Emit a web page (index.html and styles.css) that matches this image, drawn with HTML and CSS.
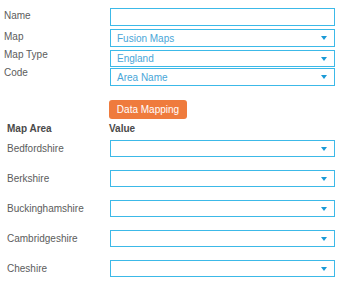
FILE: index.html
```html
<!DOCTYPE html>
<html lang="en">
<head>
	<meta charset="UTF-8">
	<title>Data Mapping</title>
	<link rel="stylesheet" href="styles.css">
</head>
<body>
	<div class="settings">
		<div class="row row-name">
			<label class="label">Name</label>
			<div class="field"></div>
		</div>
		<div class="row row-map">
			<label class="label">Map</label>
			<div class="field select"><span class="value">Fusion Maps</span><span class="caret"></span></div>
		</div>
		<div class="row row-type">
			<label class="label label-up">Map Type</label>
			<div class="field select"><span class="value">England</span><span class="caret"></span></div>
		</div>
		<div class="row row-code">
			<label class="label label-up">Code</label>
			<div class="field select"><span class="value">Area Name</span><span class="caret"></span></div>
		</div>
	</div>
	<div class="actions">
		<button class="btn-mapping">Data Mapping</button>
	</div>
	<div class="mapping">
		<div class="mapping-head">
			<span class="col-area">Map Area</span>
			<span class="col-value">Value</span>
		</div>
		<div class="mapping-row">
			<span class="area">Bedfordshire</span>
			<div class="field select"><span class="value"></span><span class="caret"></span></div>
		</div>
		<div class="mapping-row">
			<span class="area">Berkshire</span>
			<div class="field select"><span class="value"></span><span class="caret"></span></div>
		</div>
		<div class="mapping-row">
			<span class="area">Buckinghamshire</span>
			<div class="field select"><span class="value"></span><span class="caret"></span></div>
		</div>
		<div class="mapping-row">
			<span class="area">Cambridgeshire</span>
			<div class="field select"><span class="value"></span><span class="caret"></span></div>
		</div>
		<div class="mapping-row">
			<span class="area">Cheshire</span>
			<div class="field select"><span class="value"></span><span class="caret"></span></div>
		</div>
	</div>
</body>
</html>
```

FILE: styles.css
```css
body {
	margin: 0;
	font-family: "Liberation Sans", Arial, sans-serif;
	font-size: 10px;
	color: #5c5c5c;
	background-color: #fff;
}
.settings {
	padding-top: 8px;
}
.row {
	display: flex;
	align-items: flex-start;
}
.row-map,
.row-type {
	margin-top: 3px;
}
.row-code {
	margin-top: 1px;
}
.label {
	width: 106px;
	padding-left: 4px;
	line-height: 16px;
}
.label-up {
	margin-top: -3px;
}
.field {
	box-sizing: border-box;
	width: 225px;
	height: 18px;
	border: 1.5px solid #3cb9e8;
	display: flex;
	align-items: center;
	padding: 0 6px;
}
.row-type .field {
	height: 17px;
}
.value {
	flex: 1;
	color: #4aa6d8;
}
.caret {
	width: 0;
	height: 0;
	border-left: 3.5px solid transparent;
	border-right: 3.5px solid transparent;
	border-top: 4px solid #1a9ad6;
	margin-right: 1px;
}
.actions {
	padding: 14px 0 0 109px;
}
.btn-mapping {
	width: 78px;
	height: 19px;
	padding: 0;
	border: none;
	border-radius: 3px;
	background-color: #ef7b3d;
	color: #fff;
	font-family: inherit;
	font-size: 10px;
}
.mapping-head {
	display: flex;
	margin-top: 3px;
	font-weight: bold;
	color: #4a4a4a;
	line-height: 14px;
}
.col-area {
	width: 102px;
	padding-left: 7px;
}
.mapping-row {
	display: flex;
	align-items: center;
	margin-top: 13px;
}
.mapping-head + .mapping-row {
	margin-top: 4px;
}
.area {
	width: 103px;
	padding-left: 7px;
}
.mapping-row .field {
	height: 17px;
}
```
